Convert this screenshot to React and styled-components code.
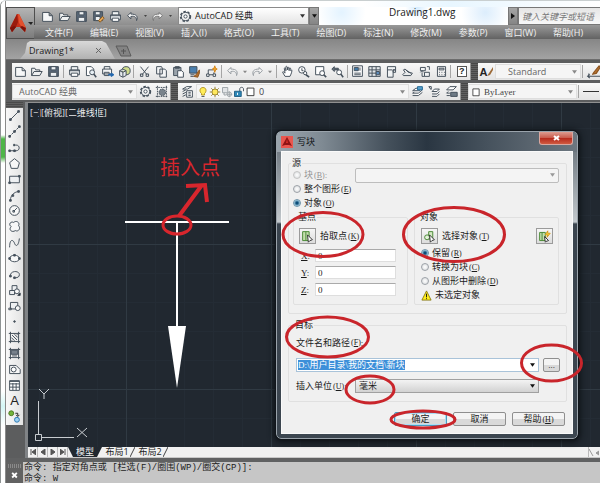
import React, { useEffect, useRef, useState } from 'react';
import styled, { createGlobalStyle } from 'styled-components';

const GlobalStyle = createGlobalStyle`
  * {
    box-sizing: border-box;
  }

  body {
    margin: 0;
    background: #fff;
    font-family: 'Open Sans', 'Noto Sans CJK SC', sans-serif;
    font-size: 9px;
    color: #222;
  }

  button,
  input,
  select {
    font: inherit;
    color: inherit;
    margin: 0;
    padding: 0;
    border: none;
    border-radius: 0;
    background: none;
    outline: none;
  }
`;

/* ---------- window shell ---------- */

const Page = styled.div`
  height: 100vh;
  display: flex;
  overflow: hidden;
  border-top: 1px solid #c9cfd0;
  border-left: 1px solid #8f9494;
  border-top-left-radius: 6px;
`;

const GlassEdge = styled.div`
  flex: 0 0 5px;
  border-right: 1px solid #8a8a8a;
  background: linear-gradient(#fff 134px, #4fb548 138px, #4fb548 156px, #fff 162px, #fff 390px, #d4f6f5 405px, #fff 425px);
`;

const Shell = styled.div`
  flex: 1;
  min-width: 0;
  display: flex;
  flex-direction: column;
  background: #5c5d5e;
`;

const Header = styled.header`
  display: flex;
  padding-top: 6px;
  background: linear-gradient(90deg, #fff 60%, #e8f6ff 75%, #fff 100%);
`;

const LogoButton = styled.button`
  flex: 0 0 29px;
  display: flex;
  align-items: center;
  justify-content: center;
  border: 1px solid #4e4e4e;
  background: linear-gradient(#b4b4b4, #7c7c7c);
`;

const HeaderRows = styled.div`
  flex: 1;
  min-width: 0;
`;

const TitleRow = styled.div`
  display: flex;
  height: 18px;
`;

const QuickAccess = styled.div`
  display: flex;
  align-items: center;
  width: 143px;
  padding-left: 4px;
  background: linear-gradient(#b9b9b9, #8e8e8e);
`;

const SpaceSelect = styled.label`
  position: relative;
  display: flex;
  align-items: center;
  width: 131px;
  background: linear-gradient(#fff, #e4e4e4);
  border: 1px solid #8a8a8a;
`;

const BarButton = styled.button`
  display: flex;
  align-items: center;
  justify-content: center;
  width: 10px;
  background: linear-gradient(#a5a5a5, #858585);
  border: 1px solid #777;
`;

const DocTitle = styled.div`
  flex: 1;
  padding-left: 70px;
  font-size: 10px;
  line-height: 11px;
  color: #222;
  background: radial-gradient(circle at 52% 0, #d5ecff 0, transparent 12px),
    radial-gradient(circle at 88% 30%, #dcedfc 0, transparent 24px),
    radial-gradient(circle at 12% 30%, #e3f3ff 0, transparent 24px), #fff;
`;

const SearchBox = styled.input`
  width: 82px;
  padding-left: 3px;
  background: linear-gradient(#e6e6e6, #f8f8f8);
  border: 1px solid #777;
  border-right: none;

  &::placeholder {
    color: #777;
    font-style: italic;
    opacity: 1;
  }
`;

const MenuBar = styled.nav`
  display: flex;
  gap: 17px;
  height: 14px;
  padding-left: 11px;
  margin-left: -1px;
  background: linear-gradient(#999, #626262);
`;

const MenuItem = styled.button`
  color: #f0f0f0;
  line-height: 13px;
  white-space: nowrap;
`;

const TabRow = styled.div`
  display: flex;
  align-items: flex-end;
  height: 21px;
  padding-left: 14px;
  background: linear-gradient(#868686, #a3a3a3);
  border-bottom: 1px solid #6d6d6d;
`;

const DrawingTab = styled.button`
  display: flex;
  align-items: center;
  justify-content: space-between;
  width: 95px;
  height: 18px;
  padding: 0 14px 0 9px;
  background: linear-gradient(#d9d9d9, #b2b2b2);
  clip-path: polygon(0 100%, 5px 12px, 7px 2px, 10px 0, 82px 0, 86px 2px, 95px 100%);
`;

/* ---------- toolbars ---------- */

const ToolbarRow = styled.div`
  display: flex;
  height: 17px;
  margin-top: 3px;
  padding-left: 6px;
`;

const Toolbar = styled.div`
  display: flex;
  align-items: center;
  flex: ${({ $width }) => ($width ? `0 0 ${$width}px` : '1')};
  min-width: 0;
  overflow: hidden;
  background: linear-gradient(#f8f8f8, #e4e4e4);
  border-right: ${({ $width }) => ($width ? '1px solid #999' : 'none')};
`;

const Grip = styled.div`
  flex: 0 0 ${({ $width }) => $width || 7}px;
  background: repeating-linear-gradient(#474747 0 1px, #606060 1px 2px);
`;

const ToolButton = styled.button`
  flex: ${({ $width }) => ($width ? `0 0 ${$width}px` : '1')};
  min-width: 0;
  height: 16px;
  display: flex;
  align-items: center;
  justify-content: center;
`;

const Separator = styled.i`
  flex: 0 0 1px;
  height: 13px;
  margin: 0 2px 0 1px;
  background: #a5a5a5;
`;

const ComboBox = styled.label`
  position: relative;
  display: flex;
  align-items: center;
  flex: ${({ $width }) => ($width ? `0 0 ${$width}px` : '1')};
  min-width: 0;
  height: 15px;
  padding-left: ${({ $indent }) => $indent || 0}px;
  background: #f5f5f5;
  border: 1px solid #dedede;
  color: ${({ $color }) => $color || '#666'};
`;

const PlainSelect = styled.select`
  flex: 1;
  min-width: 0;
  height: 100%;
  padding-left: 3px;
  appearance: none;
  line-height: 12px;
  font-family: ${({ $serif }) => ($serif ? "'Liberation Serif', 'Noto Sans CJK SC', serif" : 'inherit')};
`;

const ArrowSlot = styled.span`
  position: absolute;
  right: 3px;
  top: 50%;
  display: flex;
  transform: translateY(-50%);
  pointer-events: none;
`;

/* ---------- workspace ---------- */

const Workspace = styled.main`
  flex: 1;
  min-height: 0;
  display: flex;
  margin-top: 2px;
`;

const DrawTools = styled.aside`
  flex: 0 0 17px;
  display: flex;
  flex-direction: column;
  height: 323px;
`;

const DrawToolsGrip = styled.div`
  height: 6px;
  background: repeating-linear-gradient(#4a4a4a 0 1px, #606060 1px 2px);
`;

const DrawToolList = styled.div`
  flex: 1;
  min-height: 0;
  display: flex;
  flex-direction: column;
  background: linear-gradient(90deg, #f8f8f8, #e3e3e3);
`;

const DrawTool = styled.button`
  flex: 1;
  min-height: 0;
  display: flex;
  align-items: center;
  justify-content: center;
`;

const Viewport = styled.section`
  flex: 1;
  min-width: 0;
  display: flex;
  flex-direction: column;
  border-top: 1px solid #909090;
  border-left: 3px solid #808386;
  margin-left: 2px;
`;

const Canvas = styled.div`
  position: relative;
  flex: 1;
  min-height: 0;
  background: #212830;
`;

const ViewLabel = styled.div`
  padding: 4px 2px;
  color: #e8eaec;
  line-height: 12px;
`;

const DrawingLayer = styled.svg`
  position: absolute;
  inset: 0;
  width: 100%;
  height: 100%;
`;

const LayoutTabs = styled.div`
  display: flex;
  height: 11px;
  background: #f1f1f1;
  border-bottom: 1px solid #c8c8c8;
`;

const NavButton = styled.button`
  width: 10px;
  display: flex;
  align-items: center;
  justify-content: center;
  border-right: 1px solid #bbb;
`;

const LayoutTab = styled.button`
  width: ${({ $active }) => ($active ? 34 : 30)}px;
  line-height: 10px;
  white-space: nowrap;
  color: ${({ $active }) => ($active ? '#f4f4f4' : '#222')};
  background: ${({ $active }) => ($active ? '#212830' : 'transparent')};
  clip-path: ${({ $active }) => ($active ? 'polygon(0 0, 100% 0, calc(100% - 5px) 100%, 5px 100%)' : 'none')};
`;

const TabSlash = styled.svg`
  flex: 0 0 5px;
  width: 5px;
  height: 10px;
  margin-left: -2px;
`;

const TabScroll = styled.span`
  margin-left: auto;
  display: flex;
  align-items: center;
  width: 12px;
  border-left: 1px solid #bbb;
`;

const CommandArea = styled.footer`
  flex: 0 0 25px;
  display: flex;
  border-top: 4px solid #606162;
  overflow: hidden;
`;

const CommandHandle = styled.div`
  flex: 0 0 17px;
  display: flex;
  flex-direction: column;
  padding: 2px;
  gap: 2px;
  background: #626262;
`;

const HandleDots = styled.i`
  height: 4px;
  background: repeating-linear-gradient(90deg, #8a8a8a 0 1px, #626262 1px 2px);
`;

const CommandText = styled.div`
  flex: 1;
  padding: 1px 0 0 1px;
  background: #c6c6c6;
  font-family: 'Liberation Mono', 'Noto Sans CJK SC', monospace;
  line-height: 11px;
  white-space: pre;
  color: #1d1d1d;
`;

/* ---------- dialog ---------- */

const DialogWindow = styled.div`
  position: absolute;
  left: 248px;
  top: 28px;
  width: 302px;
  padding: 0 5px 5px;
  border: 1px solid #9aa3ab;
  border-radius: 5px;
  outline: 1px solid #10151a;
  background: linear-gradient(#5e6871, #c2c8cc 90px, #3a444e 92px, #3c4650 100%);
  box-shadow: 0 1px 6px 2px #0c1014;
  font-family: 'Liberation Serif', 'Noto Sans CJK SC', serif;
  line-height: 10px;
  color: #1c1c1c;
`;

const DialogTitle = styled.div`
  display: flex;
  justify-content: space-between;
  align-items: center;
  height: 20px;
  margin: 0 -5px;
  padding-left: 4px;
  border-radius: 4px 4px 0 0;
  background: linear-gradient(90deg, #9aa4ac, #7f8a93 45px, #45515c 110px, #2a3642 150px, #46525d 210px, #6d7780);

  h1 {
    flex: 1;
    margin: 0 0 0 4px;
    font-size: 9px;
    font-weight: 400;
    color: #0c0f12;
  }
`;

const CloseButton = styled.button`
  align-self: flex-start;
  width: 34px;
  height: 13px;
  margin-right: 4px;
  border: 1px solid #d9a79f;
  border-top: none;
  border-radius: 0 0 3px 3px;
  background: linear-gradient(#dd9c90, #c8594a 50%, #b5281b 50%, #d05a40);
  display: flex;
  align-items: center;
  justify-content: center;
`;

const DialogBody = styled.form`
  padding: 6px 5px 7px 6px;
  background: #f0f0f0;
  box-shadow: 0 0 0 1px #fafafa;
`;

const Group = styled.fieldset`
  min-width: 0;
  margin: ${({ $top }) => $top || 0}px 0 0;
  padding: 0 ${({ $right }) => $right || 5}px ${({ $bottom }) => $bottom || 8}px ${({ $left }) => $left || 4}px;
  border: 1px solid #e0e0e0;
  border-radius: 2px;
  flex: ${({ $width }) => ($width ? `0 0 ${$width}px` : '1')};

  legend {
    height: 10px;
    margin-left: -2px;
    padding: 0 1px;
  }
`;

const SplitRow = styled.div`
  display: flex;
  gap: 6px;
  margin-top: 2px;
`;

const FieldRow = styled.div`
  display: flex;
  align-items: center;
  gap: ${({ $gap }) => $gap || 0}px;
  height: ${({ $height }) => $height || 14}px;
  margin-top: ${({ $top }) => $top || 0}px;
`;

const SourceCombo = styled(ComboBox)`
  flex: 1;
  height: 15px;
  background: #f4f4f4;
  border-color: #bdbdbd;
  border-radius: 2px;
`;

const RadioLabel = styled.label`
  display: flex;
  align-items: center;
  gap: 3px;
  width: ${({ $width }) => ($width ? `${$width}px` : 'auto')};
  height: 14px;
  white-space: nowrap;
  color: ${({ $muted }) => ($muted ? '#929292' : 'inherit')};
`;

const Radio = styled.input`
  appearance: none;
  width: 8px;
  height: 8px;
  border: 1px solid #9da2a8;
  border-radius: 50%;
  background: radial-gradient(#fff, #d5d8da);

  &:checked {
    border-color: #6f93a8;
    background: radial-gradient(#0d4d78 0 1px, #a9d5ea 3px);
  }

  &:disabled {
    border-color: #c4c4c4;
  }
`;

const PickButton = styled.button`
  display: flex;
  align-items: center;
  justify-content: center;
  width: 17px;
  height: 16px;
  border: 1px solid #9b9b9b;
  background: linear-gradient(#f6f6f6, #dcdcdc);
`;

const PickLabel = styled.span`
  flex: 1;
`;

const AccelText = styled.span`
  margin-left: 1px;
  font-size: 8px;
`;

const CoordLabel = styled.label`
  display: flex;
  align-items: center;
  height: 13px;
  padding-left: 2px;
  margin-bottom: 4px;

  span {
    width: 14px;
  }
`;

const CoordInput = styled.input`
  width: 81px;
  height: 13px;
  padding-left: 2px;
  background: #fff;
  border: 1px solid #dedede;
  border-top-color: #aaa;
`;

const PathCombo = styled.div`
  position: relative;
  flex: 1;
  display: flex;
  height: 14px;
  background: #fff;
  border: 1px solid #a9c3d9;
`;

const PathInput = styled.input`
  flex: 1;
  min-width: 0;
  padding-left: 1px;

  &::selection {
    background: #3c8fd9;
    color: #fff;
  }
`;

const UnitCombo = styled(ComboBox)`
  margin-right: 21px;
  height: 14px;
  color: #1c1c1c;
  border-color: #a0a0a0;
  background: linear-gradient(#f3f3f3, #d2d2d2);
`;

const PushButton = styled.button`
  width: ${({ $width }) => $width || 53}px;
  height: 14px;
  border: 1px solid ${({ $primary }) => ($primary ? '#4a9cc0' : '#8f8f8f')};
  border-radius: 2px;
  background: linear-gradient(#f4f4f4 50%, #d9d9d9 50%);
  box-shadow: ${({ $primary }) => ($primary ? 'inset 0 0 0 1px #a9def5' : 'none')};
  line-height: 12px;
`;

const ButtonRow = styled.div`
  display: flex;
  justify-content: flex-end;
  gap: 6px;
  margin-top: 10px;
  padding-right: 2px;
`;

const Markup = styled.svg`
  position: absolute;
  left: 0;
  top: 0;
  width: 100%;
  height: 100%;
  overflow: visible;
  pointer-events: none;
`;

/* ---------- icons ---------- */

const ink = '#45505b';

const shapes = {
  new: <path d="M2 3h8l4 4v7H2zM10 3v4h4" fill="#f6f7f8" />,
  open: <path d="M2 13V4h4l1 2h5v2M2 13l3-5h10l-3 5z" fill="#eef0f1" />,
  save: (
    <>
      <path d="M2 2h12v12H2z" fill="#596777" />
      <path d="M5 2h6v4H5zM4 9h8v5H4z" fill="#eef1f3" />
    </>
  ),
  saveAs: (
    <>
      <path d="M2 2h11v11H2z" fill="#596777" />
      <path d="M4 2h6v4H4zM4 8h6v5H4z" fill="#eef1f3" />
      <path d="m8 13 5-5 2 2-5 5z" fill="#e5a85a" stroke="#8a5a20" />
    </>
  ),
  print: (
    <>
      <path d="M4 6V2h8v4M2 6h12v6H2z" fill="#f0f2f3" />
      <path d="M4 10h8v4H4z" fill="#fff" />
      <path d="M1.500 7h13" />
    </>
  ),
  preview: (
    <>
      <path d="M12 7V5L9 2H3v11h4" fill="#fff" />
      <circle cx="10" cy="9" r="3" fill="#e7eff4" />
      <path d="m12 11 3 4" strokeWidth="2" />
    </>
  ),
  plot: (
    <>
      <path d="M4 5V2h7v3M2 5h11v6H2zM4 9h6v4H4z" fill="#f3f4f5" />
      <path d="M9 12h5m-2-2 3 2-3 2" stroke="#2367ae" strokeWidth="2" />
    </>
  ),
  globe: (
    <>
      <circle cx="10" cy="7" r="5" fill="#cfdc8c" />
      <path d="M2 7l4-2 4 2v6l-4 2-4-2zM6 9v6M2 7l4 2 4-2" fill="#e9edf0" />
    </>
  ),
  cut: <path d="m3 2 8 10M13 2 5 12M3 11h3v3H3zM10 11h3v3h-3z" />,
  copy: <path d="M2 2h6l1 2v7H2zM6 5h6l2 2v8H6z" fill="#f4f5f6" />,
  paste: (
    <>
      <path d="M2 3h9v10H2zM4 2h5v2H4z" fill="#9aa3ab" />
      <path d="M7 7h5l2 2v6H7z" fill="#fff" />
    </>
  ),
  match: (
    <>
      <path d="M2 2h9v8H2z" fill="#4b7fae" />
      <path d="M3 12h5M3 14h4" />
      <path d="m14 6-4 6-3 2 5 1 2-5z" fill="#b2702e" stroke="#8c5420" />
    </>
  ),
  block: (
    <>
      <path d="M4 6h6M4 6v6h7V9" />
      <path d="M2 11h3v3H2zM10 11h3v3h-3z" fill="#fff" />
      <path d="m12 1-1 3-2 1 2 1 1 3 1-3 2-1-2-1z" fill="#f1a52b" stroke="#d3851a" />
    </>
  ),
  undo: <path d="m6 3-4 4 4 4V8c5-1 7 1 7 5 2-5 0-8-7-8z" fill="#f4f4f4" />,
  redo: <path d="m10 3 4 4-4 4V8c-5-1-7 1-7 5-2-5 0-8 7-8z" fill="#f4f4f4" />,
  hand: <path d="M5 14 2 9c0-1 1-1 3 1L4 4c1-1 2 0 2 3V2c1-1 2 0 2 4V3c1-1 2 0 2 4V4c2-1 2 0 2 3l1-1c1 1 0 4-2 8z" fill="#fff" />,
  zoomTime: (
    <>
      <circle cx="6" cy="6" r="4" fill="#fff" />
      <path d="M6 4v3h2" />
      <circle cx="10" cy="10" r="2" fill="#fff" />
      <path d="m11 12 4 3" strokeWidth="2" />
    </>
  ),
  zoomWin: (
    <>
      <path d="M2 2h10v10H2z" fill="#fff" />
      <circle cx="10" cy="10" r="3" fill="#fff" />
      <path d="m12 12 3 3" strokeWidth="2" />
    </>
  ),
  zoomPrev: (
    <>
      <path d="m4 2-3 3 3 3V6h5V4H4z" fill="#65717b" />
      <circle cx="10" cy="9" r="3" fill="#fff" />
      <path d="m12 11 3 4" strokeWidth="2" />
    </>
  ),
  props: (
    <>
      <path d="M2 1h12v13H2z" fill="#fff" />
      <path d="M4 3h5v4H4z" fill="#3f78a8" />
      <path d="M11 3v4M4 10h8M4 12h8" />
    </>
  ),
  design: (
    <>
      <path d="M1 2h14v12H1z" fill="#e3e6e9" />
      <path d="M5 2v12M1 6h14M1 10h14M10 2v12" />
      <path d="M10 8h4v4h-4z" fill="#5f8fc0" />
    </>
  ),
  palette: <path d="M3 2h10v4h-3v9H3zM3 6h6M10 6h3v3h-3z" fill="#f1f3f4" />,
  sheet: <path d="m2 12 3-3-2-3 2-1 4 4 5 1-2 3H3zM6 6l6 4" fill="#e8eaeb" />,
  markup: <path d="M3 3h6v4H3zM8 9h6v5H8zM11 2h3v4M5 9v5h3M3 9l2-2 2 2" fill="#f1f3f4" />,
  calc: (
    <>
      <path d="M3 2h10v12H3z" fill="#f1f1f1" />
      <path d="M5 4h6v2H5zM5 9h1M8 9h1M11 9h1M5 12h1M8 12h1M11 12h1" />
    </>
  ),
  gear: (
    <>
      <circle cx="8" cy="8" r="6" fill="#e4e7e9" strokeWidth="2" strokeDasharray="3 2" />
      <circle cx="8" cy="8" r="5" fill="#f7f7f7" />
      <circle cx="8" cy="8" r="2" fill="#fff" />
    </>
  ),
  space: (
    <>
      <path d="M1 3h14M1 14h14M3 1v14M14 1v14" strokeDasharray="2 1" />
      <circle cx="9" cy="9" r="4" fill="#79838c" strokeDasharray="2 1" />
    </>
  ),
  layers: <path d="m2 5 5-3h6L8 5zM2 8l4-2M2 11l4-2M2 14l4-2M7 7h7v8H7zM9 9h3M9 11h3M9 13h3" fill="#fff" />,
  bulb: (
    <>
      <path d="M6 10C3 8 3 2 8 2s5 6 2 8v2H6z" fill="#ffed59" stroke="#b09220" />
      <path d="M6 14h4" />
    </>
  ),
  sun: (
    <>
      <path d="M8 1v14M1 8h14M3 3l10 10M13 3 3 13" stroke="#8e7c34" />
      <circle cx="8" cy="8" r="4" fill="#ffe85d" stroke="#9b842b" />
    </>
  ),
  freeze: (
    <g stroke="#9aa0a5">
      <path d="M2 2h7v7H2zM4 9v3h3" fill="#e2e4e6" />
      <circle cx="11" cy="11" r="3" fill="#eee" />
      <path d="M11 7v8M7 11h8" />
    </g>
  ),
  lock: (
    <>
      <path d="M9 8V4c0-3 5-3 5 0v3" />
      <path d="M2 7h9v7H2z" fill="#2f87b7" stroke="#1d5a80" />
      <path d="M6 9v3" stroke="#fff" />
    </>
  ),
  square: <path d="M3 3h10v11H3z" fill="#fff" stroke="#222" />,
  layerA: (
    <>
      <path d="m2 7 4-3h8l-4 3zM2 10l2-1M2 13h7l5-4M2 10h7l5-4" fill="#fff" />
      <path d="M8 2h6v4H8z" fill="#55a0cc" stroke="#2a6e98" />
    </>
  ),
  layerB: <path d="M5 8l3-3h6l-3 3zM5 11h6l3-3M5 14h6l3-3M1 2l3 4M1 2h3v3" fill="#fff" />,
  layerC: (
    <>
      <path d="M2 6l4-4h8l-4 4zM2 10h4M2 13h4M2 10l2-2" fill="#fff" />
      <path d="M7 9h8v5H7z" fill="#6e7a85" />
    </>
  ),
  line: (
    <>
      <path d="M3 13 13 3" />
      <path d="M2 12h2v2H2zM12 2h2v2h-2z" fill={ink} />
    </>
  ),
  xline: (
    <>
      <path d="M2 14 14 2" strokeDasharray="3 1" />
      <path d="M1 13h2v2H1zM13 1h2v2h-2zM7 7h2v2H7z" fill={ink} />
    </>
  ),
  pline: (
    <>
      <path d="M2 12h8c5 0 5-7 0-7H8" />
      <path d="M1 11h2v2H1zM7 11h2v2H7zM7 4h1v2H7z" fill={ink} />
    </>
  ),
  polygon: <path d="m8 2 6 5-2 7H4L2 7z" fill="#f7f7f7" />,
  rect: (
    <>
      <path d="M2 4h12v8H2z" fill="#eef0f2" />
      <path d="M1 11h2v2H1zM13 3h2v2h-2z" fill={ink} />
    </>
  ),
  arc: (
    <>
      <path d="M3 14C3 8 7 4 13 3" />
      <path d="M2 13h2v2H2zM5 7h2v2H5zM12 2h2v2h-2z" fill={ink} />
    </>
  ),
  circle: (
    <>
      <circle cx="8" cy="8" r="6" fill="#f7f7f7" />
      <path d="m7 9 4-4M6 8h2v2H6z" />
    </>
  ),
  cloud: <path d="M4 8C0 6 3 1 7 3c3-3 8 0 6 4 3 3 0 8-4 6-4 3-9-1-5-5z" fill="#f7f7f7" />,
  spline: <path d="M2 14C2 2 7 5 8 9c2 5 5 3 6-6" />,
  ellipse: (
    <>
      <ellipse cx="8" cy="8" rx="6" ry="4" fill="#f7f7f7" />
      <path d="M1 7h2v2H1zM13 7h2v2h-2zM7 3h2v2H7z" fill={ink} />
    </>
  ),
  ellipseArc: (
    <>
      <path d="M3 9c0-6 11-6 11-1 0 3-2 4-5 4" />
      <path d="M2 9h2v2H2zM7 11h2v2H7z" fill={ink} />
    </>
  ),
  insert: (
    <>
      <path d="M5 2h6v6H5zM2 8h6v5H2z" fill="#eef0f2" />
      <circle cx="11" cy="9" r="3" fill="#f7f7f7" />
      <path d="M12 14h3v-3z" fill="#111" />
    </>
  ),
  makeBlock: (
    <>
      <path d="M3 3h9v8H3zM1 10h3v2H1z" fill="#eef0f2" />
      <circle cx="12" cy="10" r="3" fill="#f7f7f7" />
    </>
  ),
  point: <circle cx="8" cy="8" r="1" fill={ink} />,
  hatch: (
    <path d="M3 1v14M13 1v14M1 3h14M1 13h14M5 5l6 6M8 4l4 4M4 8l4 4M4 11l1 1M11 4l1 1" />
  ),
  gradient: (
    <>
      <path d="M4 4h8v5H4z" fill="#77818b" />
      <path d="M3 1v14M13 1v14M1 3h14M1 13h14M5 11h6" />
    </>
  ),
  region: (
    <>
      <path d="M2 3h8l5 5v5H2z" fill="#f7f7f7" />
      <circle cx="7" cy="8" r="3" fill="#fff" />
    </>
  ),
  table: (
    <>
      <path d="M2 2h12v12H2z" fill="#fff" />
      <path d="M2 3h12M2 6h12M2 10h12M6 5v9M10 5v9" />
    </>
  ),
  addSel: (
    <>
      <circle cx="4" cy="4" r="3" fill="#74b43b" stroke="#4c7a24" />
      <circle cx="11" cy="12" r="3" fill="#9ed0f2" stroke="#2a79b3" />
      <path d="M9 4h3v3m-2-1 2 2 2-2" stroke="#222" />
    </>
  ),
  pick: (
    <>
      <path d="M2 2h8v11H2zM6 2v11" fill="#c4dfae" stroke="#4b8a37" />
      <path d="m8 6 6 6-3 1-2 2z" fill="#fff" stroke="#333" />
    </>
  ),
  select: (
    <>
      <path d="M7 2h5v9H7z" fill="#d4e9c4" stroke="#4b8a37" />
      <circle cx="5" cy="9" r="3" fill="#e4f2da" stroke="#4b8a37" />
      <path d="m8 6 6 6-3 1-2 2z" fill="#fff" stroke="#333" />
    </>
  ),
  quick: (
    <>
      <path d="M2 3h7v10H2zM5 3v10" fill="#c4dfae" stroke="#4b8a37" />
      <path d="m12 1-3 5h3l-1 3 4-5h-3z" fill="#ffd83b" stroke="#d39b1e" />
      <path d="m8 8 5 5-3 1-1 1z" fill="#fff" stroke="#333" />
    </>
  ),
  dimStyle: (
    <>
      <path d="M1 13h14M3 10v5M2 13l2-2M2 13l2 2" />
      <path d="m14 2-5 6-2 3 4-1 4-6z" fill="#b2702e" stroke="#8c5420" />
    </>
  ),
};

const Icon = ({ name, size = 13, color = ink }) => (
  <svg width={size} height={size} viewBox="0 0 16 16" fill="none" stroke={color} strokeWidth="1.200" strokeLinejoin="round" aria-hidden="true">
    {shapes[name]}
  </svg>
);

const Caret = ({ color = '#888', size = 5 }) => (
  <svg width={size} height="4" viewBox="0 0 6 4" aria-hidden="true">
    <path d="M0 0h6L3 4z" fill={color} />
  </svg>
);

const LetterGlyph = styled.span`
  font-family: 'Liberation Sans', sans-serif;
  font-size: ${({ $size }) => $size || 13}px;
  font-weight: ${({ $bold }) => ($bold ? 700 : 400)};
  line-height: 14px;
  color: #222;
`;

const HelpGlyph = styled(LetterGlyph)`
  width: 10px;
  height: 11px;
  line-height: 9px;
  text-align: center;
  border: 1px solid #555;
  background: #fff;
`;

const LogoMark = () => (
  <svg width="27" height="26" viewBox="0 0 27 26" aria-hidden="true">
    <path d="M10 4h2l7 14-1 4-5-5H9l-4 5-2-4z" fill="#c8301a" />
    <path d="M10 4 3 18l2 4 4-5 2-5z" fill="#9a1b0e" />
    <path d="m11 4 1 9 6 9 1-4-7-14z" fill="#e2512f" />
    <path d="m3 18 2 4 4-5-2-1zM19 18l-1 4-5-5 2-1z" fill="#7c120a" />
    <path d="M21 12h5l-2 3z" fill="#222" />
  </svg>
);

const menus = ['文件(F)', '编辑(E)', '视图(V)', '插入(I)', '格式(O)', '工具(T)', '绘图(D)', '标注(N)', '修改(M)', '参数(P)', '窗口(W)', '帮助(H)'];

const standardTools = [
  'new', 'open', 'save', '|', 'print', 'preview', 'plot', 'globe', '|',
  'cut', 'copy', 'paste', 'match', 'block', '|', 'undo', 'v', 'redo', 'v', '|',
  'hand', 'zoomTime', 'zoomWin', 'zoomPrev', '|',
  'props', 'design', 'palette', 'sheet', 'markup', 'calc', '|', '?',
];

const drawTools = [
  'line', 'xline', 'pline', 'polygon', 'rect', 'arc', 'circle', 'cloud', 'spline', 'ellipse',
  'ellipseArc', 'insert', 'makeBlock', 'point', 'hatch', 'gradient', 'region', 'table', 'A', 'addSel',
];

const StandardToolbar = () => (
  <Toolbar $width={459}>
    {standardTools.map((tool, i) => {
      if (tool === '|') return <Separator key={i} />;
      if (tool === 'v') return <ToolButton key={i} $width={9} aria-label="more"><Caret size={4} /></ToolButton>;
      if (tool === '?') return <ToolButton key={i}><HelpGlyph $size={9} $bold>?</HelpGlyph></ToolButton>;
      return (
        <ToolButton key={i} aria-label={tool}>
          <Icon name={tool} color={tool === 'undo' || tool === 'redo' ? '#979da2' : ink} />
        </ToolButton>
      );
    })}
  </Toolbar>
);

const AppHeader = () => (
  <Header>
    <LogoButton aria-label="application menu"><LogoMark /></LogoButton>
    <HeaderRows>
      <TitleRow>
        <QuickAccess>
          {['new', 'open', 'save', 'saveAs', 'print', 'undo'].map((name) => (
            <ToolButton key={name} $width={17} aria-label={name}><Icon name={name} /></ToolButton>
          ))}
          <ToolButton $width={8} aria-label="undo list"><Caret size={3} color="#444" /></ToolButton>
          <ToolButton $width={17} aria-label="redo"><Icon name="redo" color="#777" /></ToolButton>
          <ToolButton $width={9} aria-label="redo list"><Caret size={3} color="#444" /></ToolButton>
        </QuickAccess>
        <SpaceSelect>
          <Icon name="gear" />
          <PlainSelect aria-label="workspace"><option>AutoCAD 经典</option></PlainSelect>
          <ArrowSlot><Caret color="#333" /></ArrowSlot>
        </SpaceSelect>
        <BarButton aria-label="customize"><Caret color="#111" /></BarButton>
        <DocTitle>Drawing1.dwg</DocTitle>
        <BarButton aria-label="search options">
          <svg width="4" height="6" viewBox="0 0 4 6"><path d="M0 0v6l4-3z" fill="#111" /></svg>
        </BarButton>
        <SearchBox type="text" aria-label="search" placeholder="键入关键字或短语" />
      </TitleRow>
      <MenuBar>
        {menus.map((menu) => <MenuItem key={menu}>{menu}</MenuItem>)}
      </MenuBar>
    </HeaderRows>
  </Header>
);

const Accel = ({ children }) => <AccelText>(<u>{children}</u>)</AccelText>;

const WriteBlockDialog = () => {
  const [source, setSource] = useState('objects');
  const [keep, setKeep] = useState('retain');
  const [path, setPath] = useState('D:\\用户目录\\我的文档\\新块');
  const pathRef = useRef(null);

  useEffect(() => {
    pathRef.current.focus();
    pathRef.current.select();
  }, []);

  return (
    <DialogWindow role="dialog" aria-label="写块">
      <DialogTitle>
        <svg width="12" height="12" viewBox="0 0 12 12" aria-hidden="true">
          <path d="M0 0h12v12H0z" fill="#e9574f" />
          <path d="m6 1 5 9-3-1H4l-3 1z" fill="#8f1414" />
          <path d="m6 3 1 4H5z" fill="#d8302a" />
        </svg>
        <h1>写块</h1>
        <CloseButton aria-label="close">
          <svg width="7" height="6" viewBox="0 0 7 6"><path d="m1 1 5 4M6 1 1 5" stroke="#fff" strokeWidth="2" /></svg>
        </CloseButton>
      </DialogTitle>
      <DialogBody onSubmit={(e) => e.preventDefault()}>
        <Group $left={4} $right={7} $bottom={8}>
          <legend>源</legend>
          <FieldRow>
            <RadioLabel $width={62} $muted>
              <Radio type="radio" name="source" disabled />
              <span>块<Accel>B</Accel>:</span>
            </RadioLabel>
            <SourceCombo>
              <PlainSelect aria-label="block name" disabled />
              <ArrowSlot><Caret color="#999" /></ArrowSlot>
            </SourceCombo>
          </FieldRow>
          <RadioLabel>
            <Radio type="radio" name="source" checked={source === 'all'} onChange={() => setSource('all')} />
            <span>整个图形<Accel>E</Accel></span>
          </RadioLabel>
          <RadioLabel>
            <Radio type="radio" name="source" checked={source === 'objects'} onChange={() => setSource('objects')} />
            <span>对象<Accel>O</Accel></span>
          </RadioLabel>
          <SplitRow>
            <Group $width={115} $left={5} $bottom={4}>
              <legend>基点</legend>
              <FieldRow $top={6} $height={16} $gap={4}>
                <PickButton type="button" aria-label="拾取点"><Icon name="pick" /></PickButton>
                <PickLabel>拾取点<Accel>K</Accel></PickLabel>
              </FieldRow>
              <FieldRow $height={5} />
              {['X', 'Y', 'Z'].map((axis) => (
                <CoordLabel key={axis}>
                  <span><u>{axis}</u>:</span>
                  <CoordInput type="text" defaultValue="0" />
                </CoordLabel>
              ))}
            </Group>
            <Group $left={6} $bottom={2}>
              <legend>对象</legend>
              <FieldRow $top={6} $height={16} $gap={4}>
                <PickButton type="button" aria-label="选择对象"><Icon name="select" /></PickButton>
                <PickLabel>选择对象<Accel>T</Accel></PickLabel>
                <PickButton type="button" aria-label="quick select"><Icon name="quick" /></PickButton>
              </FieldRow>
              <FieldRow $height={2} />
              {[['retain', '保留', 'R'], ['convert', '转换为块', 'C'], ['delete', '从图形中删除', 'D']].map(([id, text, key]) => (
                <RadioLabel key={id}>
                  <Radio type="radio" name="keep" checked={keep === id} onChange={() => setKeep(id)} />
                  <span>{text}<Accel>{key}</Accel></span>
                </RadioLabel>
              ))}
              <FieldRow $gap={3}>
                <svg width="11" height="11" viewBox="0 0 12 12" aria-hidden="true">
                  <path d="m6 1 5 10H1z" fill="#ffee1c" stroke="#8a7b12" strokeLinejoin="round" />
                  <path d="M6 4v4M6 9v1" stroke="#111" />
                </svg>
                <span>未选定对象</span>
              </FieldRow>
            </Group>
          </SplitRow>
        </Group>

        <Group $top={6} $left={7} $right={6} $bottom={8}>
          <legend>目标</legend>
          <FieldRow as="label" htmlFor="block-path" $top={7} $height={12}>文件名和路径<Accel>F</Accel>:</FieldRow>
          <FieldRow $top={9} $gap={4}>
            <PathCombo>
              <PathInput id="block-path" ref={pathRef} type="text" value={path} onChange={(e) => setPath(e.target.value)} />
              <ArrowSlot><Caret color="#111" /></ArrowSlot>
            </PathCombo>
            <PushButton type="button" $width={17}>...</PushButton>
          </FieldRow>
          <FieldRow $top={7}>
            <RadioLabel as="label" htmlFor="block-unit" $width={59}><span>插入单位<Accel>U</Accel>:</span></RadioLabel>
            <UnitCombo as="div">
              <PlainSelect id="block-unit" $serif><option>毫米</option></PlainSelect>
              <ArrowSlot><Caret color="#111" /></ArrowSlot>
            </UnitCombo>
          </FieldRow>
        </Group>

        <ButtonRow>
          <PushButton $primary>确定</PushButton>
          <PushButton type="button">取消</PushButton>
          <PushButton type="button">帮助<Accel>H</Accel></PushButton>
        </ButtonRow>
      </DialogBody>
      <Markup fill="none" stroke="#c9252b" strokeWidth="3">
        <ellipse cx="46" cy="102.500" rx="40" ry="22" />
        <ellipse cx="177" cy="102.500" rx="50.500" ry="27" />
        <ellipse cx="50.500" cy="205" rx="41" ry="20" />
        <ellipse cx="274.500" cy="231" rx="30" ry="18" />
        <ellipse cx="93" cy="257.500" rx="24" ry="13.500" />
        <ellipse cx="146" cy="287.500" rx="32" ry="8.500" />
      </Markup>
    </DialogWindow>
  );
};

const MarkText = styled.text`
  font-family: 'Noto Sans CJK SC', sans-serif;
  font-size: 20px;
  fill: #d8262d;
`;

const Drawing = () => (
  <DrawingLayer aria-hidden="true">
    <defs>
      <pattern id="minor" x="11" y="25" width="29" height="29" patternUnits="userSpaceOnUse">
        <path d="M0 .5h29M.5 0v29" stroke="#242c35" />
      </pattern>
      <pattern id="major" x="98" y="141" width="145" height="145" patternUnits="userSpaceOnUse">
        <path d="M0 .5h145M.5 0v145" stroke="#303a43" />
      </pattern>
    </defs>
    <rect width="100%" height="100%" fill="url(#minor)" />
    <rect width="100%" height="100%" fill="url(#major)" />
    <g stroke="#fff" strokeWidth="2" fill="#fff">
      <path d="M97 119h104M149 119v104" />
      <path d="M140 223h18l-9 62z" stroke="none" />
    </g>
    <g stroke="#c8ccd0" fill="none">
      <path d="M10.500 298v33M13 334.500h33M7.500 331.500h6v6h-6z" />
      <path d="m11 286 5 5 5-5M16 291v5M49 325l10 9M59 325l-10 9" />
    </g>
    <g stroke="#d8262d" strokeWidth="3" fill="none">
      <ellipse cx="149" cy="122" rx="14" ry="9" />
      <path d="m151 113 23-31M158 83l19-1 2 17" strokeWidth="4" />
    </g>
    <MarkText x="132" y="72">插入点</MarkText>
  </DrawingLayer>
);

const navShapes = ['M1 0v6M6 0v6L2 3z', 'M5 0v6L1 3z', 'M1 0v6l4-3z', 'M5 0v6M0 0v6l4-3z'];

const App = () => (
  <>
    <GlobalStyle />
    <Page>
      <GlassEdge />
      <Shell>
        <AppHeader />
        <TabRow>
          <DrawingTab>
            <span>Drawing1*</span>
            <svg width="5" height="5" viewBox="0 0 5 5"><path d="m0 0 5 5M5 0 0 5" stroke="#666" /></svg>
          </DrawingTab>
          <ToolButton $width={17} aria-label="new tab">
            <svg width="17" height="12" viewBox="0 0 17 12">
              <path d="M1 1h11l4 10H6z" fill="#838383" stroke="#5a5a5a" strokeLinejoin="round" />
              <path d="M6 6h5M8.500 4v5" stroke="#555" />
            </svg>
          </ToolButton>
        </TabRow>

        <ToolbarRow>
          <StandardToolbar />
          <Grip />
          <Toolbar>
            <ToolButton $width={17} aria-label="text style">
              <LetterGlyph $bold $size={11}>A</LetterGlyph>
              <svg width="6" height="11" viewBox="0 0 6 11"><path d="M6 1 2 7l-2 3 3-1 3-5z" fill="#9c6a38" /></svg>
            </ToolButton>
            <ComboBox $width={86} $indent={9}>
              <PlainSelect aria-label="text style name"><option>Standard</option></PlainSelect>
              <ArrowSlot><Caret /></ArrowSlot>
            </ComboBox>
            <Separator />
            <ToolButton $width={17} aria-label="dimension style"><Icon name="dimStyle" size={15} /></ToolButton>
          </Toolbar>
        </ToolbarRow>

        <ToolbarRow>
          <Toolbar $width={159}>
            <ComboBox $width={125} $indent={3}>
              <PlainSelect aria-label="workspace name"><option>AutoCAD 经典</option></PlainSelect>
              <ArrowSlot><Caret /></ArrowSlot>
            </ComboBox>
            <ToolButton aria-label="workspace settings"><Icon name="gear" /></ToolButton>
            <ToolButton aria-label="my workspace"><Icon name="space" /></ToolButton>
          </Toolbar>
          <Grip />
          <Toolbar $width={283}>
            <ToolButton $width={18} aria-label="layer manager"><Icon name="layers" /></ToolButton>
            <ComboBox $color="#444">
              {['bulb', 'sun', 'freeze', 'lock', 'square'].map((name) => (
                <Icon key={name} name={name} size={name === 'square' ? 11 : 12} />
              ))}
              <PlainSelect aria-label="layer"><option>0</option></PlainSelect>
              <ArrowSlot><Caret /></ArrowSlot>
            </ComboBox>
            <ToolButton $width={17} aria-label="make current"><Icon name="layerA" /></ToolButton>
            <ToolButton $width={17} aria-label="layer previous"><Icon name="layerB" /></ToolButton>
            <ToolButton $width={17} aria-label="layer states"><Icon name="layerC" /></ToolButton>
          </Toolbar>
          <Grip />
          <Toolbar>
            <ComboBox $width={109} $indent={2} $color="#444">
              <Icon name="square" size={10} />
              <PlainSelect aria-label="colour" $serif><option>ByLayer</option></PlainSelect>
              <ArrowSlot><Caret /></ArrowSlot>
            </ComboBox>
            <Separator />
            <ToolButton aria-label="linetype">
              <svg width="16" height="3" viewBox="0 0 16 3"><path d="M0 1.500h16" stroke="#333" /></svg>
            </ToolButton>
          </Toolbar>
        </ToolbarRow>

        <Workspace>
          <DrawTools>
            <DrawToolsGrip />
            <DrawToolList>
              {drawTools.map((tool) => (
                <DrawTool key={tool} aria-label={tool}>
                  {tool === 'A' ? <LetterGlyph>A</LetterGlyph> : <Icon name={tool} />}
                </DrawTool>
              ))}
            </DrawToolList>
          </DrawTools>
          <Viewport>
            <Canvas>
              <ViewLabel>[−][俯视][二维线框]</ViewLabel>
              <Drawing />
              <WriteBlockDialog />
            </Canvas>
            <LayoutTabs>
              {navShapes.map((d) => (
                <NavButton key={d} aria-label="scroll tabs">
                  <svg width="6" height="6" viewBox="0 0 6 6"><path d={d} fill="#555" stroke="#555" strokeWidth="1" /></svg>
                </NavButton>
              ))}
              <LayoutTab $active>模型</LayoutTab>
              <LayoutTab>布局1</LayoutTab>
              <TabSlash viewBox="0 0 5 10"><path d="M5 0 0 10" stroke="#444" /></TabSlash>
              <LayoutTab>布局2</LayoutTab>
              <TabSlash viewBox="0 0 5 10"><path d="M5 0 0 10" stroke="#444" /></TabSlash>
              <TabScroll>
                <svg width="10" height="9" viewBox="0 0 10 9"><path d="m0 1 4 7M10 3v4L7 5z" stroke="#999" fill="#999" /></svg>
              </TabScroll>
            </LayoutTabs>
          </Viewport>
        </Workspace>

        <CommandArea>
          <CommandHandle>
            <HandleDots />
            <svg width="13" height="12" viewBox="0 0 13 12"><path d="m4 3 5 5M9 3 4 8" stroke="#fff" strokeWidth="2" /></svg>
          </CommandHandle>
          <CommandText>{'命令: 指定对角点或 [栏选(F)/圈围(WP)/圈交(CP)]:\n命令: W'}</CommandText>
        </CommandArea>
      </Shell>
    </Page>
  </>
);

export default App;
